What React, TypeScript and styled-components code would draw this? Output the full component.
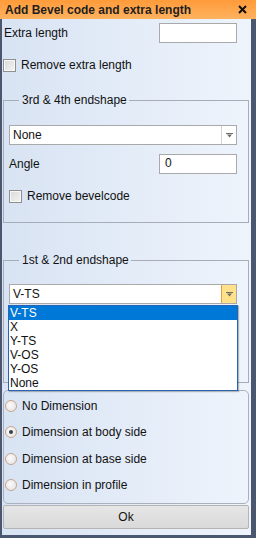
import React from 'react';
import styled, { createGlobalStyle } from 'styled-components';

const GlobalStyle = createGlobalStyle`
  html, body {
    margin: 0;
    padding: 0;
    background: #ffffff;
  }
  * {
    box-sizing: border-box;
  }
`;

const Window = styled.div`
  width: 256px;
  height: 538px;
  display: flex;
  flex-direction: column;
  font-family: 'Liberation Sans', Arial, sans-serif;
  font-size: 12px;
  color: #111;
`;

const TitleBar = styled.div`
  height: 19px;
  flex: none;
  display: flex;
  align-items: center;
  justify-content: space-between;
  padding: 0 9px 0 5px;
  background: linear-gradient(to bottom, #ff9b3a, #ffb25f);
  font-weight: bold;
  font-size: 12px;
  color: #1f1f1f;
`;

const Body = styled.div`
  flex: 1;
  display: flex;
  flex-direction: column;
  padding: 4px 3px 0 1px;
  background: linear-gradient(to right, #d8e3f3, #eef4fc);
  border-left: 2px solid #4b566f;
  border-right: 5px solid #4b566f;
  border-bottom: 3px solid #4b566f;
`;

interface IRow {
  top?: number;
  indent?: number;
}

const Row = styled.div<IRow>`
  display: flex;
  align-items: center;
  justify-content: space-between;
  margin-top: ${(p) => p.top ?? 0}px;
  padding-left: ${(p) => p.indent ?? 0}px;
`;

const TextBox = styled.div`
  width: 78px;
  height: 20px;
  background: #fff;
  border: 1px solid #a9a9a9;
  padding: 1px 5px;
  margin-right: 11px;
`;

const CheckRow = styled.div<IRow>`
  display: flex;
  align-items: center;
  gap: 5px;
  margin-top: ${(p) => p.top ?? 0}px;
  padding-left: ${(p) => p.indent ?? 0}px;
`;

const CheckBox = styled.span`
  width: 13px;
  height: 13px;
  border: 1px solid #8f8f8f;
  background: linear-gradient(to bottom right, #d9d9d9, #f4f4f4);
  box-shadow: inset 0 0 0 1px #f7f7f7;
`;

interface IGroup {
  top: number;
  h: number;
}

const Group = styled.fieldset<IGroup>`
  margin: ${(p) => p.top}px 0 0 0;
  padding: 0 0 0 5px;
  height: ${(p) => p.h}px;
  width: 246px;
  border: 1px solid #a6adb8;
`;

const Legend = styled.legend`
  margin-left: 10px;
  padding: 0 2px 0 3px;
  line-height: 13px;
`;

const ComboWrap = styled.div<{ top: number }>`
  position: relative;
  width: 228px;
  margin-top: ${(p) => p.top}px;
`;

const Combo = styled.div`
  display: flex;
  height: 20px;
  background: #fff;
  border: 1px solid #a9a9a9;
`;

const ComboText = styled.span`
  flex: 1;
  padding: 2px 0 0 3px;
`;

const ComboArrow = styled.span<{ open?: boolean }>`
  width: 15px;
  display: flex;
  align-items: center;
  justify-content: center;
  border-left: 1px solid ${(p) => (p.open ? '#e3a043' : '#d4d4d4')};
  background: ${(p) => (p.open ? '#ffe18c' : '#fff')};
`;

const DropList = styled.div`
  position: absolute;
  left: -1px;
  top: 21px;
  width: 230px;
  background: #fff;
  border: 1px solid #2a64b0;
  box-shadow: 1px 1px 1px rgba(0, 0, 0, 0.25);
  z-index: 2;
`;

const DropItem = styled.div<{ active?: boolean }>`
  height: 14px;
  line-height: 14px;
  padding-left: 1px;
  background: ${(p) => (p.active ? '#0078d7' : 'transparent')};
  color: ${(p) => (p.active ? '#fff' : '#111')};
  &:first-child {
    line-height: 15px;
  }
`;

const RadioGroup = styled.div`
  margin: 7px 0 0 0;
  width: 246px;
  height: 114px;
  border: 1px solid #aab1bc;
  border-radius: 5px;
  padding: 8px 0 0 1px;
  display: flex;
  flex-direction: column;
  gap: 13.5px;
`;

const RadioRow = styled.div`
  display: flex;
  align-items: center;
  gap: 5px;
  height: 13px;
`;

const Radio = styled.span<{ checked?: boolean }>`
  width: 12px;
  height: 12px;
  border-radius: 50%;
  border: 1px solid #c9a48b;
  background: radial-gradient(circle at 40% 40%, #fafafa, #e2e2e2);
  display: flex;
  align-items: center;
  justify-content: center;
  &::after {
    content: '';
    display: ${(p) => (p.checked ? 'block' : 'none')};
    width: 4px;
    height: 4px;
    border-radius: 50%;
    background: #3a3f4a;
  }
`;

const OkButton = styled.div`
  margin: 1px 0 0 0;
  width: 246px;
  height: 24px;
  display: flex;
  align-items: center;
  justify-content: center;
  border: 1px solid #b4b4b4;
  border-radius: 2px;
  background: linear-gradient(to bottom, #e6e6e6, #d9d9d9);
`;

function Arrow() {
  return (
    <svg width="7" height="5" viewBox="0 0 7 5">
      <rect x="0" y="0" width="7" height="1" fill="#6b6b6b" />
      <polygon points="1,1.5 6,1.5 3.5,4.5" fill="#6b6b6b" />
    </svg>
  );
}

function CloseIcon() {
  return (
    <svg width="9" height="9" viewBox="0 0 9 9">
      <path d="M1 1 L8 8 M8 1 L1 8" stroke="#111" strokeWidth="2" />
    </svg>
  );
}

const options = ['V-TS', 'X', 'Y-TS', 'V-OS', 'Y-OS', 'None'];
const radios = [
  'No Dimension',
  'Dimension at body side',
  'Dimension at base side',
  'Dimension in profile',
];

function App() {
  return (
    <Window>
      <GlobalStyle />
      <TitleBar>
        <span>Add Bevel code and extra length</span>
        <CloseIcon />
      </TitleBar>
      <Body>
        <Row indent={1}>
          <span>Extra length</span>
          <TextBox />
        </Row>
        <CheckRow top={15}>
          <CheckBox />
          <span>Remove extra length</span>
        </CheckRow>
        <Group top={22} h={129}>
          <Legend>3rd &amp; 4th endshape</Legend>
          <ComboWrap top={18}>
            <Combo>
              <ComboText>None</ComboText>
              <ComboArrow>
                <Arrow />
              </ComboArrow>
            </Combo>
          </ComboWrap>
          <Row top={9}>
            <span>Angle</span>
            <TextBox>0</TextBox>
          </Row>
          <CheckRow top={15}>
            <CheckBox />
            <span>Remove bevelcode</span>
          </CheckRow>
        </Group>
        <Group top={31} h={129}>
          <Legend>1st &amp; 2nd endshape</Legend>
          <ComboWrap top={17}>
            <Combo>
              <ComboText>V-TS</ComboText>
              <ComboArrow open>
                <Arrow />
              </ComboArrow>
            </Combo>
            <DropList>
              {options.map((o, i) => (
                <DropItem key={`opt${i}`} active={i === 0}>
                  {o}
                </DropItem>
              ))}
            </DropList>
          </ComboWrap>
        </Group>
        <RadioGroup>
          {radios.map((r, i) => (
            <RadioRow key={`radio${i}`}>
              <Radio checked={i === 1} />
              <span>{r}</span>
            </RadioRow>
          ))}
        </RadioGroup>
        <OkButton>Ok</OkButton>
      </Body>
    </Window>
  );
}

export default App;
